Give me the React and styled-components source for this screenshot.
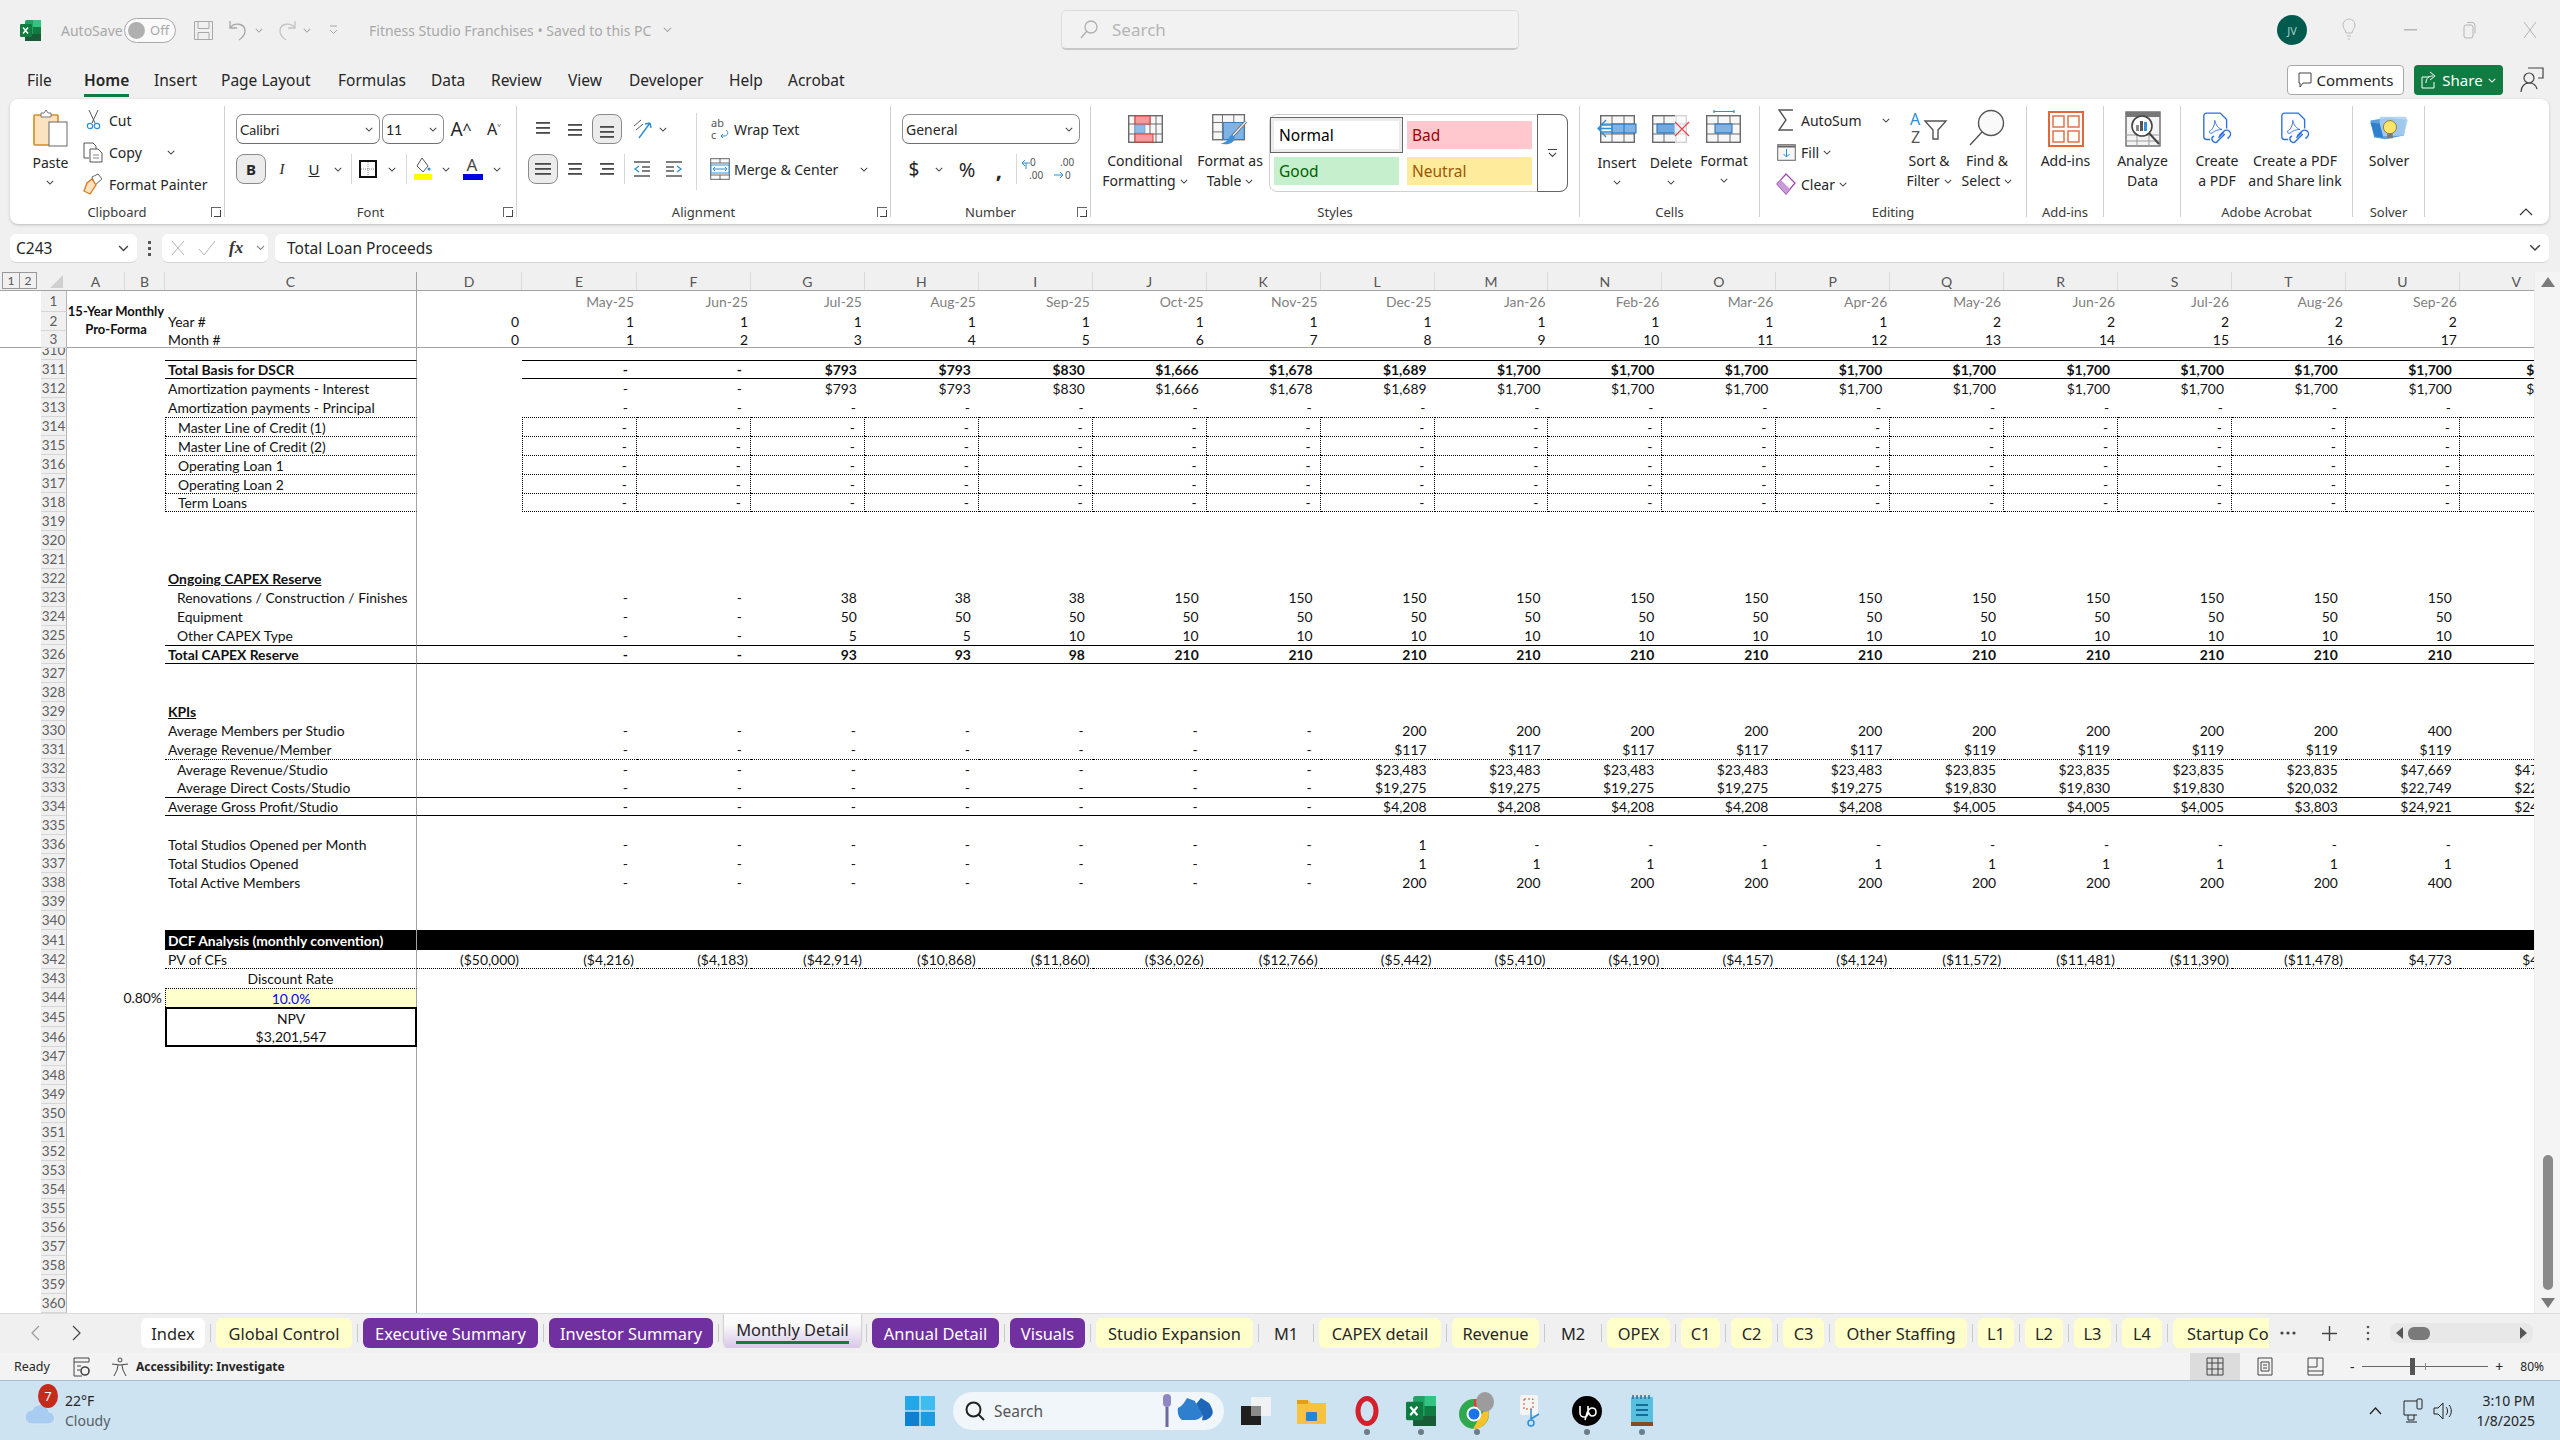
import React from "react";
import styled, { createGlobalStyle, css } from "styled-components";

const UI = `"Noto Sans", "Open Sans", sans-serif`;
const CELL = `Lato, "Liberation Sans", sans-serif`;

const GlobalStyle = createGlobalStyle`
  html, body { margin: 0; padding: 0; background: #f0f0f0; }
  * { box-sizing: border-box; }
  svg { display: block; flex: none; overflow: visible; }
`;

const Page = styled.div`
  width: 2560px;
  height: 1440px;
  display: flex;
  flex-direction: column;
  background: #f0f0f0;
  overflow: hidden;
  font-family: ${UI};
  color: #262626;
`;

/* ---------- little shared drawings ---------- */
const Chev = ({ s = 9, c = "#444" }) => (
  <svg width={s} height={s * 0.6} viewBox="0 0 10 6">
    <path d="M1 1l4 4 4-4" fill="none" stroke={c} strokeWidth="1.3" />
  </svg>
);

const TableGrid = ({ cols = [0, 12, 24, 35], rows = [0, 9, 19, 28], c = "#6a6a6a" }) => (
  <g fill="none" stroke={c} strokeWidth="1.4">
    <rect x="0.7" y="0.7" width="33.6" height="26.6" fill="#f7f7f7" />
    {cols.slice(1, -1).map((x) => <path key={x} d={`M${x} 0v28`} strokeWidth="1" />)}
    {rows.slice(1, -1).map((y) => <path key={y} d={`M0 ${y}h35`} strokeWidth="1" />)}
  </g>
);

const IconCond = () => (
  <svg width="35" height="28" viewBox="0 0 35 28">
    <TableGrid cols={[0, 7, 22, 28, 35]} />
    <rect x="7" y="1" width="15" height="8" fill="#f79aa0" stroke="#d83b3b" />
    <rect x="7" y="10" width="10" height="8" fill="#8dbce8" stroke="#5a9bd8" strokeWidth=".6" />
    <rect x="7" y="19" width="18" height="8" fill="#f79aa0" stroke="#d83b3b" />
  </svg>
);
const IconFormatTable = () => (
  <svg width="36" height="33" viewBox="0 0 38 35">
    <TableGrid cols={[0, 11, 23, 35]} />
    <rect x="12" y="9" width="22" height="18" fill="#7fb3e6" stroke="#2f7fc8" />
    <path d="M36 8L22 23" stroke="#666" strokeWidth="3.2" fill="none" />
    <path d="M36 8L22 23" stroke="#f3f3f3" strokeWidth="1.4" fill="none" />
    <path d="M21 22c-3 1-3 5-5 6-2 2-5 3-7 3 4 2 13 2 15-5 0-2-1-3-3-4z" fill="#3d90d6" />
  </svg>
);
const IconInsert = () => (
  <svg width="40" height="28" viewBox="0 0 40 28">
    <g transform="translate(3 0)"><TableGrid /></g>
    <rect x="15" y="9" width="24" height="9" fill="#7fb3e6" stroke="#1f6fb8" />
    <path d="M27 9v9" stroke="#1f6fb8" />
    <path d="M9 5L1 13.5 9 22M1 13.5h14M5 10h10M5 17h10" fill="none" stroke="#2b8fd8" strokeWidth="1.3" />
  </svg>
);
const IconDelete = () => (
  <svg width="38" height="28" viewBox="0 0 38 28">
    <TableGrid />
    <rect x="5" y="9" width="18" height="9" fill="#6fa9e0" stroke="#1f6fb8" />
    <path d="M22 8l6 5.5-6 5.5z" fill="#9cc6ec" />
    <rect x="23" y="0" width="15" height="28" fill="#fff" opacity=".7" />
    <path d="M23 7l14 14M37 7L23 21" stroke="#e8454a" strokeWidth="1.3" />
  </svg>
);
const IconFormatCell = () => (
  <svg width="36" height="33" viewBox="0 0 36 33">
    <path d="M8 1.5h20M8 0v3M28 0v3" stroke="#2b8fd8" strokeWidth="1.2" fill="none" />
    <g transform="translate(0 5)">
      <TableGrid />
      <rect x="9" y="9" width="17" height="9" fill="#7fb3e6" stroke="#1f6fb8" />
    </g>
  </svg>
);
const IconSort = () => (
  <svg width="38" height="36" viewBox="0 0 38 36">
    <text x="0" y="14" fontFamily="Noto Sans" fontSize="16" fill="#2b8fd8">A</text>
    <text x="1" y="32" fontFamily="Noto Sans" fontSize="16" fill="#555">Z</text>
    <path d="M15 10h21l-8 9v9h-5v-9z" fill="none" stroke="#555" strokeWidth="1.4" />
  </svg>
);
const IconFind = () => (
  <svg width="38" height="38" viewBox="0 0 38 38">
    <circle cx="23" cy="14" r="12.5" fill="#fafafa" stroke="#555" strokeWidth="1.4" />
    <path d="M14 23L2 36" stroke="#555" strokeWidth="1.4" />
  </svg>
);
const IconAddins = () => (
  <svg width="36" height="36" viewBox="0 0 36 36">
    <rect x="1" y="1" width="34" height="34" fill="none" stroke="#e2683c" strokeWidth="2" />
    <rect x="5" y="5" width="11" height="11" fill="none" stroke="#e2683c" strokeWidth="1.4" />
    <rect x="20" y="5" width="11" height="11" fill="none" stroke="#e2683c" strokeWidth="1.4" />
    <rect x="5" y="20" width="11" height="11" fill="none" stroke="#e2683c" strokeWidth="1.4" />
    <rect x="20" y="20" width="11" height="11" fill="none" stroke="#e2683c" strokeWidth="1.4" />
  </svg>
);
const IconAnalyze = () => (
  <svg width="36" height="36" viewBox="0 0 36 36">
    <rect x="1" y="1" width="34" height="34" fill="#f4f4f4" stroke="#6a6a6a" strokeWidth="1.4" />
    <rect x="1" y="1" width="34" height="5" fill="#777" />
    <path d="M1 24h34M1 30h34M12 24v11M24 24v11" stroke="#9a9a9a" />
    <circle cx="17" cy="15" r="10" fill="#fff" stroke="#444" strokeWidth="1.6" />
    <rect x="11" y="14" width="3" height="6" fill="#8a8a8a" />
    <rect x="15" y="10" width="3" height="10" fill="#555" />
    <rect x="19" y="11" width="3" height="9" fill="#3d90d6" />
    <path d="M24 22l10 11" stroke="#444" strokeWidth="2" />
  </svg>
);
const IconPdf = () => (
  <svg width="31" height="35" viewBox="0 0 34 38">
    <path d="M9 30H5a3 3 0 0 1-3-3V4a3 3 0 0 1 3-3h15l7 7v10" fill="none" stroke="#2f6fe0" strokeWidth="1.5" />
    <path d="M8 21c3-1 6-6 6-12 1 5 4 9 8 10-4 0-8 1-11 4-2 1-3-1-3-2z" fill="none" stroke="#2f6fe0" strokeWidth="1" />
    <path d="M19 26l5-5a4 4 0 0 1 6 6l-2 2M25 24l-6 6-3 3a4 4 0 0 1-5-5l2-2M18 28l6-6" fill="none" stroke="#2f6fe0" strokeWidth="1.6" />
  </svg>
);
const IconSolver = () => (
  <svg width="38" height="28" viewBox="0 0 40 30">
    <path d="M0 6l18-3 20 2-2 17-20 4-12-2z" fill="#5c9fdc" />
    <path d="M10 2h28l2 4-4 16-26 1z" fill="#a9cff0" opacity=".85" />
    <path d="M0 8l10 1 4 15-9-1z" fill="#2f80cc" />
    <circle cx="21" cy="13" r="7" fill="#ffe66b" stroke="#8a7a2a" />
    <path d="M18 20h6v5h-6z" fill="#7a7a7a" />
  </svg>
);
const IconPaste = () => (
  <svg width="36" height="38" viewBox="0 0 36 38">
    <rect x="1" y="6" width="24" height="30" rx="1" fill="#fbe3c0" stroke="#d98a20" strokeWidth="1.6" />
    <path d="M8 8V4h3l2-3 2 3h3v4z" fill="#fff" stroke="#777" />
    <rect x="16" y="13" width="18" height="24" fill="#fff" stroke="#666" />
  </svg>
);
const IconCut = () => (
  <svg width="15" height="20" viewBox="0 0 15 20">
    <path d="M3 0l6 13M12 0L6 13" stroke="#555" fill="none" />
    <circle cx="4" cy="16" r="2.7" fill="none" stroke="#2b8fd8" strokeWidth="1.2" />
    <circle cx="11" cy="16" r="2.7" fill="none" stroke="#2b8fd8" strokeWidth="1.2" />
  </svg>
);
const IconCopy = () => (
  <svg width="20" height="21" viewBox="0 0 20 21">
    <path d="M1 1h9l3 3v3M1 1v15h5" fill="none" stroke="#555" />
    <path d="M7 7h8l4 4v9H7z" fill="#fff" stroke="#555" />
    <path d="M10 13h6M10 16h6" stroke="#888" />
  </svg>
);
const IconPainter = () => (
  <svg width="20" height="22" viewBox="0 0 20 22">
    <path d="M9 4l6-3 4 5-7 6z" fill="#fff" stroke="#666" />
    <path d="M9 6l4 6-6 9-6-3 3-8z" fill="#fbe3c0" stroke="#e0761c" strokeWidth="1.3" />
  </svg>
);
const IconAlign = ({ lines, c = "#4a4a4a" }) => (
  <svg width="20" height="20" viewBox="0 0 20 20">
    {lines.map(([x, y, w]) => <rect key={y} x={x} y={y} width={w} height="1.8" fill={c} />)}
  </svg>
);
const IconOrient = () => (
  <svg width="22" height="22" viewBox="0 0 22 22">
    <path d="M3 8l7-6M5 12l7-6" stroke="#555" fill="none" />
    <path d="M8 20L19 5M19 5l-5 1M19 5l1 5" stroke="#2b8fd8" strokeWidth="1.4" fill="none" />
  </svg>
);
const IconWrap = () => (
  <svg width="20" height="24" viewBox="0 0 20 24">
    <text x="1" y="10" fontFamily="Noto Sans" fontSize="11" fill="#555">ab</text>
    <text x="1" y="22" fontFamily="Noto Sans" fontSize="11" fill="#555">c</text>
    <path d="M16 13c3 2 2 6-2 6h-3m2-2l-2 2 2 2" fill="none" stroke="#2b8fd8" />
  </svg>
);
const IconMerge = () => (
  <svg width="20" height="22" viewBox="0 0 20 22">
    <rect x=".7" y=".7" width="18.6" height="20.6" fill="#fff" stroke="#666" />
    <path d="M10 0v5M10 17v5M0 5h20M0 17h20" stroke="#666" />
    <rect x="1" y="7" width="18" height="8" fill="#fff" stroke="#2b8fd8" />
    <path d="M3 11h14M5 9l-2 2 2 2M15 9l2 2-2 2" fill="none" stroke="#2b8fd8" />
  </svg>
);
const IconIndent = ({ flip }) => (
  <svg width="20" height="20" viewBox="0 0 20 20">
    <g transform={flip ? "translate(20 0) scale(-1 1)" : undefined}>
      <path d="M2 3h16M10 8h8M10 12h8M2 17h16" stroke="#555" strokeWidth="1.4" />
      <path d="M7 7l-4 3 4 3" fill="none" stroke="#2b8fd8" strokeWidth="1.3" />
    </g>
  </svg>
);
const IconBorders = () => (
  <svg width="18" height="18" viewBox="0 0 18 18">
    <rect x="1" y="1" width="16" height="16" fill="#fff" stroke="#111" strokeWidth="2" />
    <path d="M9 2v14M2 9h14" stroke="#888" strokeDasharray="1 1" />
  </svg>
);
const IconFill = () => (
  <svg width="18" height="26" viewBox="0 0 18 26">
    <path d="M8 2l6 8-5 6-6-6z" fill="#fff" stroke="#555" />
    <circle cx="15" cy="13" r="1.5" fill="#2b8fd8" />
    <rect x="0" y="18" width="18" height="6" fill="#ffff00" />
  </svg>
);
const IconDecimal = ({ more }) => (
  <svg width="26" height="26" viewBox="0 0 26 26">
    <text x={more ? 8 : 9} y="10" fontFamily="Noto Sans" fontSize="10" fill="#555">{more ? ".00" : "0"}</text>
    <text x={more ? 13 : 8} y="23" fontFamily="Noto Sans" fontSize="10" fill="#555">{more ? "0" : ".00"}</text>
    <path d={more ? "M2 19h9m-3-3l3 3-3 3" : "M9 7H1m3-3L1 7l3 3"} fill="none" stroke="#2b8fd8" />
    <path d={more ? "" : "M5 7v6"} stroke="#2b8fd8" />
  </svg>
);
const IconSigma = () => (
  <svg width="18" height="22" viewBox="0 0 18 22">
    <path d="M16 1H2l7 10-7 10h14" fill="none" stroke="#555" strokeWidth="1.4" />
  </svg>
);
const IconFillDown = () => (
  <svg width="19" height="17" viewBox="0 0 19 17">
    <rect x=".7" y=".7" width="17.6" height="15.6" fill="#f6f6f6" stroke="#666" />
    <path d="M1 2.5h17" stroke="#666" strokeWidth="2" />
    <path d="M9.5 5v8M6.5 10l3 3 3-3" fill="none" stroke="#2b8fd8" />
  </svg>
);
const IconClear = () => (
  <svg width="20" height="22" viewBox="0 0 20 22">
    <path d="M10 1l9 9-9 11L1 11z" fill="#fff" stroke="#a349b5" strokeWidth="1.3" />
    <path d="M5 7l9 9-4 5-9-10z" fill="#c89ad6" />
  </svg>
);

const Launcher = styled.span`
  position: absolute;
  right: 3px;
  bottom: 0;
  width: 10px;
  height: 10px;
  border-left: 1px solid #666;
  border-top: 1px solid #666;
  &::after {
    content: "";
    position: absolute;
    right: 0;
    bottom: 0;
    width: 6px;
    height: 6px;
    border-right: 1px solid #444;
    border-bottom: 1px solid #444;
  }
`;

/* ---------- title bar ---------- */
const TitleBar = styled.div`
  height: 60px;
  flex: none;
  display: flex;
  align-items: center;
  color: #a8a8a8;
  font-size: 14px;
`;
const TitleSlot = styled.div`
  flex: none;
  margin-left: ${(p) => p.$ml || 0}px;
  width: ${(p) => p.$w}px;
  display: flex;
  align-items: center;
  justify-content: ${(p) => (p.$left ? "flex-start" : "center")};
  white-space: nowrap;
`;
const Toggle = styled.div`
  width: 52px;
  height: 25px;
  border: 1px solid #a8a8a8;
  border-radius: 13px;
  background: #fafafa;
  display: flex;
  align-items: center;
  padding-left: 3px;
  gap: 5px;
  font-size: 13px;
  &::before {
    content: "";
    width: 17px;
    height: 17px;
    border-radius: 50%;
    background: #b0b0b0;
  }
`;
const SearchBox = styled.div`
  margin-left: 390px;
  width: 458px;
  height: 40px;
  flex: none;
  display: flex;
  align-items: center;
  gap: 14px;
  padding-left: 18px;
  font-size: 17px;
  color: #b5b5b5;
  background: #f2f2f2;
  border: 1px solid #dcdcdc;
  border-bottom: 2px solid #c8c8c8;
  border-radius: 5px;
`;
const Avatar = styled.div`
  margin-left: 758px;
  width: 30px;
  height: 30px;
  flex: none;
  border-radius: 50%;
  background: #005a4e;
  color: #a7cfc6;
  font-size: 11px;
  display: flex;
  align-items: center;
  justify-content: center;
`;

/* ---------- menu row ---------- */
const MenuBar = styled.div`
  height: 39px;
  flex: none;
  display: flex;
  padding: 5px 0 0 27px;
`;
const MenuItem = styled.div`
  width: ${(p) => p.$w}px;
  flex: none;
  font-size: 15.5px;
`;
const MenuLabel = styled.span`
  display: inline-block;
  height: 32px;
  line-height: 31px;
  font-weight: ${(p) => (p.$active ? 600 : 400)};
  border-bottom: 3px solid ${(p) => (p.$active ? "#107c41" : "transparent")};
`;
const CommentsBtn = styled.div`
  margin-left: auto;
  width: 117px;
  height: 30px;
  flex: none;
  display: flex;
  align-items: center;
  justify-content: center;
  gap: 5px;
  background: #fff;
  border: 1px solid #a8a8a8;
  border-radius: 4px;
  font-size: 15px;
`;
const ShareBtn = styled.div`
  margin-left: 10px;
  width: 89px;
  height: 30px;
  flex: none;
  display: flex;
  align-items: center;
  justify-content: center;
  gap: 5px;
  background: #107c41;
  color: #fff;
  border-radius: 4px;
  font-size: 15px;
`;
const CoauthorSlot = styled.div`
  width: 57px;
  height: 30px;
  flex: none;
  display: flex;
  align-items: center;
  justify-content: center;
`;

/* ---------- ribbon ---------- */
const Ribbon = styled.div`
  position: relative;
  flex: none;
  margin: 0 11px 0 10px;
  height: 125px;
  padding: 7px 0;
  display: flex;
  background: #fff;
  border-radius: 8px;
  box-shadow: 0 1px 3px rgba(0, 0, 0, 0.22);
`;
const Group = styled.div`
  position: relative;
  flex: none;
  width: ${(p) => p.$w}px;
  display: flex;
  flex-direction: column;
  border-right: 1px solid #d2d2d2;
`;
const GroupBody = styled.div`
  height: 98px;
  flex: none;
  display: flex;
`;
const GroupLabel = styled.div`
  height: 16px;
  line-height: 16px;
  text-align: center;
  font-size: 13px;
  color: #3a3a3a;
`;
const LargeBtn = styled.div`
  flex: none;
  width: ${(p) => p.$w || 76}px;
  padding-top: 4px;
  display: flex;
  flex-direction: column;
  align-items: center;
  font-size: 14px;
  white-space: nowrap;
`;
const LargeIcon = styled.div`
  height: 37px;
  display: flex;
  align-items: ${(p) => p.$align || "flex-end"};
  justify-content: center;
`;
const LargeLabel = styled.div`
  margin-top: ${(p) => (p.$low ? 6 : 4)}px;
  line-height: 20px;
  text-align: center;
  display: flex;
  flex-direction: column;
  align-items: center;
`;
const LabelLine = styled.span`
  display: flex;
  align-items: center;
  gap: 4px;
  height: 20px;
`;
const ChevLine = styled.span`
  height: 18px;
  display: flex;
  align-items: center;
`;
const SmallStack = styled.div`
  flex: none;
  width: ${(p) => (p.$w ? `${p.$w}px` : "auto")};
  display: flex;
  flex-direction: column;
  gap: 4px;
  margin-left: ${(p) => p.$ml || 0}px;
`;
const SmallRow = styled.div`
  height: 28px;
  display: flex;
  align-items: center;
  font-size: 14px;
  white-space: nowrap;
`;
const ToolStack = styled.div`
  flex: none;
  padding: 8px 0 0 ${(p) => p.$pl ?? 11}px;
  display: flex;
  flex-direction: column;
  gap: 10px;
`;
const ToolRow = styled.div`
  height: 30px;
  display: flex;
  align-items: center;
  font-size: 14px;
  white-space: nowrap;
`;
const Tool = styled.div`
  flex: none;
  width: ${(p) => p.$w}px;
  height: 30px;
  margin-left: ${(p) => p.$ml || 0}px;
  display: flex;
  align-items: center;
  justify-content: center;
  font-size: ${(p) => p.$fs || 14}px;
  font-family: ${(p) => p.$font || "inherit"};
  font-weight: ${(p) => p.$fw || 400};
  font-style: ${(p) => p.$it ? "italic" : "normal"};
  text-decoration: ${(p) => p.$ul ? "underline" : "none"};
  ${(p) => p.$on && css`
    background: #ececec;
    border: 1px solid #8a8a8a;
    border-radius: 8px;
  `}
`;
const ToolText = styled.span`
  flex: none;
  width: ${(p) => (p.$w ? `${p.$w}px` : "auto")};
  margin-left: ${(p) => p.$ml || 0}px;
  font-size: 14px;
`;
const ToolSep = styled.div`
  flex: none;
  width: 1px;
  height: 30px;
  margin: 0 ${(p) => p.$mr || 4}px 0 ${(p) => p.$ml || 4}px;
  background: #d8d8d8;
`;
const Combo = styled.div`
  flex: none;
  width: ${(p) => p.$w}px;
  height: 30px;
  margin-left: ${(p) => p.$ml || 0}px;
  padding: 0 6px 0 3px;
  display: flex;
  align-items: center;
  justify-content: space-between;
  font-size: 14px;
  border: 1px solid #8f8f8f;
  border-bottom-color: #6f6f6f;
  border-radius: 7px;
  font-family: ${(p) => p.$font || "inherit"};
`;
const VLine = styled.div`
  flex: none;
  width: 1px;
  height: 77px;
  margin: 7px 0 0 ${(p) => p.$ml}px;
  background: #d8d8d8;
`;
const Gallery = styled.div`
  flex: none;
  margin: 8px 0 0 8px;
  width: 299px;
  height: 78px;
  display: flex;
  border: 1px solid #cfcfcf;
  border-radius: 8px;
`;
const StyleGrid = styled.div`
  flex: none;
  width: 267px;
  padding: 6px 4px;
  display: grid;
  grid-template-columns: 125px 125px;
  grid-auto-rows: 28px;
  column-gap: 8px;
  row-gap: 8px;
`;
const StyleCell = styled.div`
  display: flex;
  align-items: center;
  padding-left: 5px;
  font-size: 15.5px;
  color: ${(p) => p.$c};
  background: ${(p) => p.$bg};
  ${(p) => p.$sel && css`box-shadow: 0 0 0 3px #ececec, 0 0 0 4px #666;`}
`;
const GalleryScroll = styled.div`
  flex: 1;
  margin: -1px -1px -1px 0;
  display: flex;
  flex-direction: column;
  align-items: center;
  justify-content: center;
  gap: 2px;
  border: 1px solid #666;
  border-radius: 0 8px 8px 0;
`;
const GalleryDash = styled.span`
  width: 9px;
  height: 1px;
  background: #444;
`;
const CollapseBtn = styled.div`
  position: absolute;
  right: 16px;
  bottom: 8px;
`;

/* ---------- formula bar ---------- */
const FormulaRow = styled.div`
  flex: none;
  height: 29px;
  margin-top: 10px;
  padding: 0 11px 0 10px;
  display: flex;
  align-items: stretch;
`;
const NameBox = styled.div`
  flex: none;
  width: 127px;
  display: flex;
  align-items: center;
  justify-content: space-between;
  padding: 0 8px 0 6px;
  background: #fff;
  border-radius: 6px;
  border-bottom: 1px solid #d4d4d4;
  font-size: 15.5px;
`;
const DotsSlot = styled.div`
  flex: none;
  width: 25px;
  display: flex;
  flex-direction: column;
  align-items: center;
  justify-content: center;
  gap: 3px;
`;
const Dot = styled.span`
  width: 3px;
  height: 3px;
  background: #555;
`;
const FxBox = styled.div`
  flex: none;
  width: 106px;
  display: flex;
  align-items: center;
  gap: 13px;
  padding-left: 9px;
  background: #fff;
  border-radius: 6px;
  border-bottom: 1px solid #d4d4d4;
`;
const FxText = styled.span`
  font-family: "Liberation Serif", serif;
  font-style: italic;
  font-weight: 700;
  font-size: 17px;
  color: #333;
`;
const FormulaInput = styled.div`
  flex: 1;
  margin-left: 7px;
  padding: 0 8px 0 12px;
  display: flex;
  align-items: center;
  justify-content: space-between;
  background: #fff;
  border-radius: 6px;
  border-bottom: 1px solid #d4d4d4;
  font-size: 15.5px;
`;

/* ---------- sheet ---------- */
const COLS = css`
  grid-template-columns: 41px 26px 58px 40px 252px 105px 115px 114px repeat(16, 113.93px);
`;
const SOLID = "1px solid #000";
const DOT = "1px dotted #000";
const THICK = "2px solid #000";
const FREEZE = "1px solid #a3a3a3";

const SheetArea = styled.div`
  flex: none;
  height: 1041px;
  margin-top: 9px;
  display: flex;
  background: #fff;
`;
const GridArea = styled.div`
  flex: none;
  width: 2534px;
  overflow: hidden;
  display: flex;
  flex-direction: column;
  font-family: ${CELL};
  font-size: 13.9px;
  color: #111;
`;
const ColHeader = styled.div`
  flex: none;
  height: 19px;
  width: max-content;
  display: grid;
  ${COLS}
  background: #f0f0f0;
  border-bottom: 1px solid #a3a3a3;
`;
const OutlineBtns = styled.div`
  display: flex;
  padding-left: 2px;
  font-size: 12px;
  color: #555;
`;
const OutlineBtn = styled.span`
  width: 18px;
  height: 17px;
  display: flex;
  align-items: center;
  justify-content: center;
  border: 1px solid #999;
  margin-left: ${(p) => (p.$second ? -1 : 0)}px;
`;
const Corner = styled.div`
  display: flex;
  align-items: flex-end;
  justify-content: flex-end;
  padding: 0 4px 2px 0;
`;
const ColLabel = styled.div`
  display: flex;
  align-items: center;
  justify-content: center;
  color: #555;
  font-size: 14px;
  border-right: ${(p) => p.$freeze ? FREEZE : "1px solid #dadada"};
`;
const Frozen = styled.div`
  flex: none;
  height: 57px;
  width: max-content;
  display: grid;
  ${COLS}
  grid-template-rows: 21px 19px 17px;
  border-bottom: 1px solid #a3a3a3;
`;
const FrozenTitle = styled.div`
  grid-column: 3 / 5;
  grid-row: 1 / 4;
  display: flex;
  flex-direction: column;
  align-items: center;
  justify-content: center;
  font-weight: 700;
  line-height: 18px;
  font-size: 13px;
  white-space: nowrap;
`;
const RowHead = styled.div`
  background: #f0f0f0;
  color: #5e5e5e;
  font-size: 13.5px;
  display: flex;
  align-items: center;
  justify-content: center;
  border-right: 1px solid #b5b5b5;
  border-bottom: 1px solid #d6d6d6;
`;
const Body = styled.div`
  flex: 1;
  overflow: hidden;
`;
const Row = styled.div`
  width: max-content;
  height: ${(p) => p.$h || 19}px;
  margin-top: ${(p) => p.$mt || 0}px;
  display: grid;
  ${COLS}
`;
const Cell = styled.div`
  display: flex;
  align-items: center;
  white-space: nowrap;
  min-width: 0;
  justify-content: ${(p) => ({ r: "flex-end", c: "center" }[p.$a] || "flex-start")};
  padding: 0 ${(p) => p.$pr ?? 0}px 0 ${(p) => p.$pl ?? 0}px;
  font-weight: ${(p) => (p.$bold ? 700 : 400)};
  color: ${(p) => p.$c || "inherit"};
  background: ${(p) => p.$bg || "transparent"};
  border-top: ${(p) => p.$t || "none"};
  border-bottom: ${(p) => p.$b || "none"};
  border-left: ${(p) => p.$l || "none"};
  border-right: ${(p) => p.$r || "none"};
`;
const Underlined = styled.span`
  text-decoration: underline;
`;
const LabelIndent = 12;

const VScroll = styled.div`
  flex: 1;
  display: flex;
  flex-direction: column;
  align-items: center;
  background: #f4f4f4;
  border-left: 1px solid #ececec;
`;
const ScrollArrow = styled.div`
  flex: none;
  height: 20px;
  display: flex;
  align-items: center;
`;
const ScrollThumb = styled.div`
  flex: none;
  margin-top: auto;
  margin-bottom: 3px;
  width: 10px;
  height: 135px;
  background: #8a8a8a;
  border-radius: 5px;
`;

/* ---------- sheet tabs ---------- */
const TabBar = styled.div`
  flex: none;
  height: 40px;
  padding-bottom: 5px;
  display: flex;
  align-items: flex-end;
  border-top: 1px solid #dcdcdc;
`;
const TabNav = styled.div`
  flex: none;
  width: 141px;
  height: 30px;
  padding-left: 31px;
  display: flex;
  align-items: center;
  gap: 32px;
`;
const TabStrip = styled.div`
  flex: none;
  width: 2128px;
  display: flex;
  align-items: flex-end;
  overflow: hidden;
`;
const tabKinds = {
  white: css`background: #fff; height: 30px; border-radius: 6px;`,
  yellow: css`background: #ffffcc; height: 30px; border-radius: 6px;`,
  purple: css`background: #7030a0; color: #fff; height: 30px; border-radius: 6px;`,
  plain: css`height: 30px;`,
  active: css`
    height: 34px;
    background: linear-gradient(#fdfcfe, #fafafa 30%, #d9c6e8);
    border-radius: 0 0 6px 6px;
    box-shadow: 0 0 2px rgba(0, 0, 0, 0.45);
    align-items: flex-end;
    padding-bottom: 4px;
  `,
};
const Tab = styled.div`
  flex: none;
  width: ${(p) => p.$w}px;
  display: flex;
  align-items: center;
  justify-content: ${(p) => (p.$clip ? "flex-start" : "center")};
  padding-left: ${(p) => (p.$clip ? 14 : 0)}px;
  font-size: 16.4px;
  white-space: nowrap;
  overflow: hidden;
  ${(p) => tabKinds[p.$kind]}
`;
const ActiveLabel = styled.span`
  line-height: 23px;
  border-bottom: 3px solid #107c41;
`;
const TabSep = styled.span`
  flex: none;
  width: 1px;
  height: 18px;
  margin: 0 5px 6px;
  background: #c9c9c9;
`;
const TabTool = styled.div`
  flex: none;
  width: 24px;
  height: 30px;
  margin-left: ${(p) => p.$ml}px;
  display: flex;
  align-items: center;
  justify-content: center;
  font-size: 20px;
  color: #444;
`;
const HScroll = styled.div`
  flex: none;
  margin: 0 0 5px 10px;
  width: 143px;
  height: 20px;
  padding: 0 6px;
  display: flex;
  align-items: center;
  background: #e8e8e8;
  border-radius: 8px;
`;
const HThumb = styled.span`
  width: 22px;
  height: 13px;
  margin-left: 5px;
  margin-right: auto;
  background: #7a7a7a;
  border-radius: 6px;
`;

/* ---------- status bar ---------- */
const StatusBar = styled.div`
  flex: none;
  height: 27px;
  display: flex;
  align-items: center;
  background: #f3f3f3;
  font-size: 12.5px;
  padding-left: 14px;
`;
const StatusBold = styled.span`
  margin-left: 4px;
  font-weight: 700;
  font-size: 12px;
`;
const ViewBtn = styled.div`
  flex: none;
  width: 50px;
  height: 27px;
  margin-left: ${(p) => (p.$first ? "auto" : 0)};
  display: flex;
  align-items: center;
  justify-content: center;
  background: ${(p) => (p.$on ? "#dcdcdc" : "transparent")};
`;
const ZoomSlider = styled.div`
  position: relative;
  flex: none;
  margin: 0 5px 0 4px;
  width: 126px;
  height: 1px;
  background: #666;
  &::before {
    content: "";
    position: absolute;
    left: 48px;
    top: -8px;
    width: 5px;
    height: 17px;
    background: #555;
  }
  &::after {
    content: "";
    position: absolute;
    left: 63px;
    top: -3px;
    width: 1px;
    height: 7px;
    background: #888;
  }
`;
const ZoomSign = styled.span`
  flex: none;
  width: 12px;
  margin-left: ${(p) => p.$ml || 0}px;
  text-align: center;
  font-size: 14px;
`;
const ZoomPct = styled.span`
  flex: none;
  margin: 0 16px 0 15px;
  font-size: 12px;
`;

/* ---------- taskbar ---------- */
const Taskbar = styled.div`
  flex: none;
  height: 60px;
  display: flex;
  align-items: center;
  background: #cee3f1;
  border-top: 1px solid #a9bccb;
  padding: 0 25px;
`;
const Weather = styled.div`
  position: relative;
  flex: none;
  width: 30px;
  height: 28px;
  margin-top: 8px;
`;
const WeatherBadge = styled.span`
  position: absolute;
  left: 13px;
  top: -17px;
  width: 20px;
  height: 24px;
  border-radius: 50%;
  background: #c42b1c;
  color: #fff;
  font-size: 13px;
  display: flex;
  align-items: center;
  justify-content: center;
`;
const TwoLines = styled.div`
  flex: none;
  width: ${(p) => p.$w}px;
  margin-left: ${(p) => p.$ml}px;
  display: flex;
  flex-direction: column;
  align-items: ${(p) => (p.$end ? "flex-end" : "flex-start")};
  font-size: 14px;
  line-height: 20px;
`;
const MutedLine = styled.span`
  color: #565f66;
`;
const TaskSearch = styled.div`
  flex: none;
  margin-left: 18px;
  width: 271px;
  height: 38px;
  padding: 0 10px 0 12px;
  display: flex;
  align-items: center;
  gap: 9px;
  background: #f1f6fa;
  border-radius: 19px;
  font-size: 15.5px;
  color: #555;
`;
const TaskSearchArt = styled.div`
  margin-left: auto;
  display: flex;
  align-items: center;
  gap: 4px;
`;
const AppIcon = styled.div`
  position: relative;
  flex: none;
  width: 30px;
  height: 30px;
  margin-left: ${(p) => p.$ml}px;
  display: flex;
  align-items: center;
  justify-content: center;
  ${(p) => p.$open && css`
    &::after {
      content: "";
      position: absolute;
      left: 12px;
      bottom: -9px;
      width: 6px;
      height: 6px;
      border-radius: 50%;
      background: #6e7c86;
    }
  `}
`;
const TrayIcon = styled.div`
  flex: none;
  margin-left: ${(p) => p.$ml};
  width: ${(p) => p.$w}px;
  display: flex;
  justify-content: center;
`;

/* ---------- data ---------- */
const Dash = (n) => Array(n).fill("-");
const many = (v, n) => Array(n).fill(v);
const COLUMN_LETTERS = "ABCDEFGHIJKLMNOPQRSTUV".split("");
const MONTHS = ["May-25", "Jun-25", "Jul-25", "Aug-25", "Sep-25", "Oct-25", "Nov-25", "Dec-25", "Jan-26", "Feb-26", "Mar-26", "Apr-26", "May-26", "Jun-26", "Jul-26", "Aug-26", "Sep-26", ""];
const YEARS = [...many("1", 12), ...many("2", 5), ""];
const MONTH_NO = [...Array.from({ length: 17 }, (_, i) => String(i + 1)), ""];
const BASIS = ["-", "-", "$793", "$793", "$830", "$1,666", "$1,678", "$1,689", ...many("$1,700", 10)];

const row = (n, extra = {}) => ({ n, ...extra });
const ROWS = [
  row(310, { mt: -7 }),
  row(311, { label: "Total Basis for DSCR", bold: true, vals: BASIS, t: SOLID, b: SOLID, skipD: true, showV: true, lastPad: 4 }),
  row(312, { label: "Amortization payments - Interest", vals: BASIS, showV: true, lastPad: 4 }),
  row(313, { label: "Amortization payments - Principal", vals: Dash(17) }),
  row(314, { label: "Master Line of Credit (1)", indent: true, vals: Dash(17), t: DOT, boxed: true, skipD: true }),
  row(315, { label: "Master Line of Credit (2)", indent: true, vals: Dash(17), t: DOT, boxed: true, skipD: true }),
  row(316, { label: "Operating Loan 1", indent: true, vals: Dash(17), t: DOT, boxed: true, skipD: true }),
  row(317, { label: "Operating Loan 2", indent: true, vals: Dash(17), t: DOT, boxed: true, skipD: true }),
  row(318, { label: "Term Loans", indent: true, vals: Dash(17), t: DOT, b: DOT, boxed: true, skipD: true }),
  row(319), row(320), row(321),
  row(322, { label: "Ongoing CAPEX Reserve", bold: true, under: true }),
  row(323, { label: "Renovations / Construction / Finishes", indent: true, vals: ["-", "-", "38", "38", "38", ...many("150", 12)] }),
  row(324, { label: "Equipment", indent: true, vals: ["-", "-", ...many("50", 15)] }),
  row(325, { label: "Other CAPEX Type", indent: true, vals: ["-", "-", "5", "5", ...many("10", 13)] }),
  row(326, { label: "Total CAPEX Reserve", bold: true, vals: ["-", "-", "93", "93", "98", ...many("210", 12)], t: SOLID, b: SOLID }),
  row(327), row(328),
  row(329, { label: "KPIs", bold: true, under: true }),
  row(330, { label: "Average Members per Studio", vals: [...Dash(7), ...many("200", 9), "400"] }),
  row(331, { label: "Average Revenue/Member", vals: [...Dash(7), ...many("$117", 5), ...many("$119", 5)] }),
  row(332, { label: "Average Revenue/Studio", indent: true, t: DOT, showV: true, vals: [...Dash(7), ...many("$23,483", 5), ...many("$23,835", 4), "$47,669", "$47,669"] }),
  row(333, { label: "Average Direct Costs/Studio", indent: true, showV: true, vals: [...Dash(7), ...many("$19,275", 5), "$19,830", "$19,830", "$19,830", "$20,032", "$22,749", "$22,749"] }),
  row(334, { label: "Average Gross Profit/Studio", t: SOLID, b: SOLID, showV: true, vals: [...Dash(7), ...many("$4,208", 5), "$4,005", "$4,005", "$4,005", "$3,803", "$24,921", "$24,921"] }),
  row(335),
  row(336, { label: "Total Studios Opened per Month", vals: [...Dash(7), "1", ...Dash(9)] }),
  row(337, { label: "Total Studios Opened", vals: [...Dash(7), ...many("1", 10)] }),
  row(338, { label: "Total Active Members", vals: [...Dash(7), ...many("200", 9), "400"] }),
  row(339), row(340),
  row(341, { h: 20, label: "DCF Analysis (monthly convention)", bold: true, black: true }),
  row(342, { label: "PV of CFs", b: DOT, d: "($50,000)", showV: true, vals: ["($4,216)", "($4,183)", "($42,914)", "($10,868)", "($11,860)", "($36,026)", "($12,766)", "($5,442)", "($5,410)", "($4,190)", "($4,157)", "($4,124)", "($11,572)", "($11,481)", "($11,390)", "($11,478)", "$4,773", "$4,773"] }),
  row(343, { label: "Discount Rate", center: true }),
  row(344, { b2: "0.80%", label: "10.0%", center: true, input: true }),
  row(345, { h: 20, label: "NPV", center: true, box: "top" }),
  row(346, { h: 20, label: "$3,201,547", center: true, box: "bottom" }),
  ...Array.from({ length: 14 }, (_, i) => row(347 + i)),
];

// accounting format leaves a gap on the right, negatives in brackets do not
const valuePad = (v) => (v.startsWith("(") ? 3 : v === "-" ? 9 : 8);

const SheetRow = ({ r }) => {
  const dataT = r.black ? "none" : r.t;
  const dataB = r.b;
  const vals = r.vals || [];
  let labelProps = { $pl: r.indent ? LabelIndent : 3 };
  if (r.center) labelProps = { $a: "c" };
  const cBorder = r.box
    ? { $l: THICK, $r: THICK, $t: r.box === "top" ? THICK : undefined, $b: r.box === "bottom" ? THICK : undefined }
    : { $t: r.t, $b: r.b, $l: r.boxed || r.input ? DOT : undefined, $r: FREEZE };
  if (r.input) cBorder.$t = DOT;
  return (
    <Row $h={r.h} $mt={r.mt}>
      <div />
      <RowHead>{r.n}</RowHead>
      <Cell />
      <Cell $a="r" $pr={3}>{r.b2}</Cell>
      <Cell
        {...labelProps}
        {...cBorder}
        $bold={r.bold}
        $bg={r.black ? "#000" : r.input ? "#ffffcc" : undefined}
        $c={r.black ? "#fff" : r.input ? "#0000ff" : undefined}
      >
        {r.under ? <Underlined>{r.label}</Underlined> : r.label}
      </Cell>
      <Cell
        $a="r"
        $pr={3}
        $t={r.skipD ? undefined : dataT}
        $b={r.skipD ? undefined : dataB}
        $bg={r.black ? "#000" : undefined}
      >
        {r.d}
      </Cell>
      {Array.from({ length: 18 }, (_, i) => {
        const last = i === 17;
        const v = last && !r.showV ? undefined : vals[i];
        return (
          <Cell
            key={i}
            $a="r"
            $pr={!v ? 0 : last ? r.lastPad || 8 : valuePad(v)}
            $bold={r.bold}
            $t={dataT}
            $b={dataB}
            $l={r.boxed && i === 0 ? DOT : undefined}
            $r={r.boxed ? DOT : undefined}
            $bg={r.black ? "#000" : undefined}
          >
            {v}
          </Cell>
        );
      })}
    </Row>
  );
};

const FrozenRow = ({ n, label, d, vals, color }) => (
  <>
    <div />
    <RowHead>{n}</RowHead>
    <Cell $pl={3} $r={FREEZE}>{label}</Cell>
    <Cell $a="r" $pr={3}>{d}</Cell>
    {vals.map((v, i) => (
      <Cell key={i} $a="r" $pr={3} $c={color}>{v}</Cell>
    ))}
  </>
);

const TABS = [
  ["Index", "white", 64], ["Global Control", "yellow", 136], ["Executive Summary", "purple", 175],
  ["Investor Summary", "purple", 164], ["Monthly Detail", "active", 137], ["Annual Detail", "purple", 127],
  ["Visuals", "purple", 75], ["Studio Expansion", "yellow", 157], ["M1", "plain", 44],
  ["CAPEX detail", "yellow", 122], ["Revenue", "yellow", 87], ["M2", "plain", 46], ["OPEX", "yellow", 63],
  ["C1", "yellow", 39], ["C2", "yellow", 41], ["C3", "yellow", 41], ["Other Staffing", "yellow", 132],
  ["L1", "yellow", 36], ["L2", "yellow", 38], ["L3", "yellow", 37], ["L4", "yellow", 40],
  ["Startup Costs", "yellow", 120],
];
const MENU = [["File", 57], ["Home", 70], ["Insert", 67], ["Page Layout", 117], ["Formulas", 93], ["Data", 60], ["Review", 77], ["View", 61], ["Developer", 100], ["Help", 59], ["Acrobat", 60]];

/* ---------- sections ---------- */
const XlLogo = ({ s = 21 }) => (
  <svg width={s} height={s} viewBox="0 0 21 21">
    <rect x="5" y="0" width="16" height="21" rx="1.5" fill="#21a366" />
    <rect x="13" y="0" width="8" height="7" fill="#33c481" />
    <rect x="5" y="14" width="16" height="7" fill="#185c37" />
    <rect x="13" y="7" width="8" height="7" fill="#107c41" />
    <rect x="0" y="4" width="12" height="13" rx="1" fill="#107c41" />
    <path d="M3 7.5l5 6M8 7.5l-5 6" stroke="#fff" strokeWidth="1.5" />
  </svg>
);

const Title = () => (
  <TitleBar>
    <TitleSlot $ml={20} $w={21}><XlLogo /></TitleSlot>
    <TitleSlot $ml={20} $w={63} $left>AutoSave</TitleSlot>
    <TitleSlot $w={52}><Toggle>Off</Toggle></TitleSlot>
    <TitleSlot $ml={17} $w={21}>
      <svg width="21" height="21" viewBox="0 0 21 21" fill="none" stroke="#a8a8a8"><path d="M1.5 1.5h18v18h-18zM5 1.5v7h11v-7M5 19.5v-7h11v7" /></svg>
    </TitleSlot>
    <TitleSlot $ml={15} $w={18}>
      <svg width="18" height="22" viewBox="0 0 18 22" fill="none" stroke="#a8a8a8" strokeWidth="1.3"><path d="M1 2v7h7M1 9c4-6 15-5 15 3 0 4-3 7-6 9" /></svg>
    </TitleSlot>
    <TitleSlot $ml={8} $w={8}><Chev s={8} c="#a8a8a8" /></TitleSlot>
    <TitleSlot $ml={15} $w={18}>
      <svg width="18" height="22" viewBox="0 0 18 22" fill="none" stroke="#c4c4c4" strokeWidth="1.3"><path d="M17 2v7h-7M17 9C13 3 2 4 2 12c0 4 3 7 6 9" /></svg>
    </TitleSlot>
    <TitleSlot $ml={7} $w={8}><Chev s={8} c="#a8a8a8" /></TitleSlot>
    <TitleSlot $ml={18} $w={8}>
      <svg width="9" height="10" viewBox="0 0 9 10" fill="none" stroke="#a8a8a8"><path d="M1 1h7M1 5l3.5 3.5L8 5" /></svg>
    </TitleSlot>
    <TitleSlot $ml={32} $w={294} $left>Fitness Studio Franchises • Saved to this PC</TitleSlot>
    <TitleSlot $w={8}><Chev s={9} c="#a8a8a8" /></TitleSlot>
    <SearchBox>
      <svg width="18" height="20" viewBox="0 0 18 20" fill="none" stroke="#b0b0b0" strokeWidth="1.3"><circle cx="11" cy="7" r="6" /><path d="M6.5 11.5L1 18" /></svg>
      Search
    </SearchBox>
    <Avatar>JV</Avatar>
    <TitleSlot $ml={32} $w={20}>
      <svg width="14" height="22" viewBox="0 0 14 22" fill="none" stroke="#bcbcbc"><path d="M4 14c0-3-3-4-3-8a6 6 0 0 1 12 0c0 4-3 5-3 8zM5 17h4M6 20h2" /></svg>
    </TitleSlot>
    <TitleSlot $ml={43} $w={16}><svg width="13" height="2"><rect width="13" height="1.5" fill="#b5b5b5" /></svg></TitleSlot>
    <TitleSlot $ml={44} $w={14}>
      <svg width="13" height="18" viewBox="0 0 13 18" fill="none" stroke="#b5b5b5"><rect x="1" y="4" width="9" height="13" rx="2" /><path d="M4 1.5h5a3 3 0 0 1 3 3v8" /></svg>
    </TitleSlot>
    <TitleSlot $ml={46} $w={16}>
      <svg width="14" height="20" viewBox="0 0 14 20" fill="none" stroke="#b5b5b5"><path d="M1 2l12 16M13 2L1 18" /></svg>
    </TitleSlot>
  </TitleBar>
);

const Menu = () => (
  <MenuBar>
    {MENU.map(([m, w]) => (
      <MenuItem key={m} $w={w}><MenuLabel $active={m === "Home"}>{m}</MenuLabel></MenuItem>
    ))}
    <CommentsBtn>
      <svg width="14" height="18" viewBox="0 0 14 18" fill="none" stroke="#444"><path d="M1 2h12v10H5l-3 4v-4H1z" /></svg>
      Comments
    </CommentsBtn>
    <ShareBtn>
      <svg width="16" height="18" viewBox="0 0 16 18" fill="none" stroke="#fff"><path d="M8 6H1v11h12v-6M5 12c0-5 3-7 7-7M9 1l5 4-5 4" /></svg>
      Share
      <Chev s={8} c="#fff" />
    </ShareBtn>
    <CoauthorSlot>
      <svg width="24" height="26" viewBox="0 0 24 26" fill="none" stroke="#444" strokeWidth="1.2"><circle cx="9" cy="11" r="5" /><path d="M1 25c0-6 4-9 8-9s7 2 8 6M8 1h15v10h-5" /></svg>
    </CoauthorSlot>
  </MenuBar>
);

const Large = ({ icon, lines, w, low, chevOnly, align }) => (
  <LargeBtn $w={w}>
    <LargeIcon $align={align}>{icon}</LargeIcon>
    <LargeLabel $low={low}>
      {lines.map(([t, c]) => (
        <LabelLine key={t}>{t}{c && <Chev s={8} />}</LabelLine>
      ))}
      {chevOnly && <ChevLine><Chev s={8} /></ChevLine>}
    </LargeLabel>
  </LargeBtn>
);

const L1 = [[2, 4, 16], [2, 9, 16], [2, 14, 16]];
const RibbonArea = () => (
  <Ribbon>
    <Group $w={215}>
      <GroupBody>
        <Large w={81} low chevOnly lines={[["Paste"]]} icon={<IconPaste />} />
        <SmallStack $ml={-9}>
          <SmallRow><Tool $w={22}><IconCut /></Tool><ToolText $ml={5}>Cut</ToolText></SmallRow>
          <SmallRow><Tool $w={22}><IconCopy /></Tool><ToolText $w={36} $ml={5}>Copy</ToolText><Tool $w={8} $ml={22}><Chev s={8} /></Tool></SmallRow>
          <SmallRow><Tool $w={22}><IconPainter /></Tool><ToolText $ml={5}>Format Painter</ToolText></SmallRow>
        </SmallStack>
      </GroupBody>
      <GroupLabel>Clipboard</GroupLabel>
      <Launcher />
    </Group>

    <Group $w={292}>
      <GroupBody>
        <ToolStack>
          <ToolRow>
            <Combo $w={144} $font={CELL}>Calibri<Chev s={8} /></Combo>
            <Combo $w={62} $ml={2} $font={CELL}>11<Chev s={8} /></Combo>
            <Tool $w={30} $ml={2} $fs={19}>A<sup>^</sup></Tool>
            <Tool $w={32} $ml={2} $fs={16}>A<sup>˅</sup></Tool>
          </ToolRow>
          <ToolRow>
            <Tool $w={30} $on $fw={700} $fs={15}>B</Tool>
            <Tool $w={32} $fs={15} $it $font={`"Liberation Serif", serif`}>I</Tool>
            <Tool $w={32} $fs={15} $ul>U</Tool>
            <Tool $w={16}><Chev s={8} /></Tool>
            <ToolSep $ml={5} $mr={4} />
            <Tool $w={24}><IconBorders /></Tool>
            <Tool $w={16} $ml={4}><Chev s={8} /></Tool>
            <ToolSep $ml={6} $mr={4} />
            <Tool $w={24}><IconFill /></Tool>
            <Tool $w={16} $ml={3}><Chev s={8} /></Tool>
            <Tool $w={24} $ml={7}>
              <svg width="20" height="26" viewBox="0 0 20 26">
                <text x="3.5" y="15" fontFamily="Noto Sans" fontSize="17" fill="#444">A</text>
                <rect x="0" y="18" width="20" height="6" fill="#0000e6" />
              </svg>
            </Tool>
            <Tool $w={16} $ml={4}><Chev s={8} /></Tool>
          </ToolRow>
        </ToolStack>
      </GroupBody>
      <GroupLabel>Font</GroupLabel>
      <Launcher />
    </Group>

    <Group $w={374}>
      <GroupBody>
        <ToolStack>
          <ToolRow>
            <Tool $w={30}><IconAlign lines={[[3, 3, 14], [3, 8, 14], [3, 13, 14]]} /></Tool>
            <Tool $w={30} $ml={2}><IconAlign lines={[[3, 5, 14], [3, 10, 14], [3, 15, 14]]} /></Tool>
            <Tool $w={30} $ml={2} $on><IconAlign lines={[[3, 7, 14], [3, 12, 14], [3, 17, 14]]} /></Tool>
            <Tool $w={24} $ml={8}><IconOrient /></Tool>
            <Tool $w={12} $ml={3}><Chev s={8} /></Tool>
          </ToolRow>
          <ToolRow>
            <Tool $w={30} $on><IconAlign lines={L1} /></Tool>
            <Tool $w={30} $ml={2}><IconAlign lines={[[3, 4, 14], [4, 9, 12], [3, 14, 14]]} /></Tool>
            <Tool $w={30} $ml={2}><IconAlign lines={[[3, 4, 14], [5, 9, 12], [3, 14, 14]]} /></Tool>
            <ToolSep $ml={2} $mr={2} />
            <Tool $w={30}><IconIndent /></Tool>
            <Tool $w={30} $ml={2}><IconIndent flip /></Tool>
          </ToolRow>
        </ToolStack>
        <VLine $ml={7} />
        <ToolStack $pl={12}>
          <ToolRow><Tool $w={22}><IconWrap /></Tool><ToolText $ml={3}>Wrap Text</ToolText></ToolRow>
          <ToolRow><Tool $w={22}><IconMerge /></Tool><ToolText $w={106} $ml={3}>Merge &amp; Center</ToolText><Tool $w={10} $ml={19}><Chev s={8} /></Tool></ToolRow>
        </ToolStack>
      </GroupBody>
      <GroupLabel>Alignment</GroupLabel>
      <Launcher />
    </Group>

    <Group $w={200}>
      <GroupBody>
        <ToolStack>
          <ToolRow><Combo $w={178}>General<Chev s={8} /></Combo></ToolRow>
          <ToolRow>
            <Tool $w={24} $fs={19}>$</Tool>
            <Tool $w={12} $ml={7}><Chev s={8} /></Tool>
            <Tool $w={30} $ml={7} $fs={20}>%</Tool>
            <Tool $w={24} $ml={5} $fs={22} $fw={700}>,</Tool>
            <ToolSep $ml={5} $mr={2} />
            <Tool $w={30}><IconDecimal /></Tool>
            <Tool $w={30} $ml={1}><IconDecimal more /></Tool>
          </ToolRow>
        </ToolStack>
      </GroupBody>
      <GroupLabel>Number</GroupLabel>
      <Launcher />
    </Group>

    <Group $w={489}>
      <GroupBody>
        <Large w={108} icon={<IconCond />} lines={[["Conditional"], ["Formatting", true]]} align="center" />
        <Large w={62} icon={<IconFormatTable />} lines={[["Format as"], ["Table", true]]} />
        <Gallery>
          <StyleGrid>
            <StyleCell $bg="#fff" $c="#000" $sel>Normal</StyleCell>
            <StyleCell $bg="#ffc7ce" $c="#9c0006">Bad</StyleCell>
            <StyleCell $bg="#c6efce" $c="#006100">Good</StyleCell>
            <StyleCell $bg="#ffeb9c" $c="#9c5700">Neutral</StyleCell>
          </StyleGrid>
          <GalleryScroll><GalleryDash /><Chev s={9} /></GalleryScroll>
        </Gallery>
      </GroupBody>
      <GroupLabel>Styles</GroupLabel>
    </Group>

    <Group $w={180}>
      <GroupBody>
        <Large w={74} low chevOnly align="center" icon={<IconInsert />} lines={[["Insert"]]} />
        <Large w={34} low chevOnly align="center" icon={<IconDelete />} lines={[["Delete"]]} />
        <Large w={72} chevOnly align="flex-start" icon={<IconFormatCell />} lines={[["Format"]]} />
      </GroupBody>
      <GroupLabel>Cells</GroupLabel>
    </Group>

    <Group $w={267}>
      <GroupBody>
        <SmallStack $ml={14} $w={126}>
          <SmallRow><Tool $w={24}><IconSigma /></Tool><ToolText $w={72} $ml={3}>AutoSum</ToolText><Tool $w={10} $ml={8}><Chev s={8} /></Tool></SmallRow>
          <SmallRow><Tool $w={24}><IconFillDown /></Tool><ToolText $ml={3}>Fill</ToolText><Tool $w={10} $ml={3}><Chev s={8} /></Tool></SmallRow>
          <SmallRow><Tool $w={24}><IconClear /></Tool><ToolText $ml={3}>Clear</ToolText><Tool $w={10} $ml={3}><Chev s={8} /></Tool></SmallRow>
        </SmallStack>
        <Large w={58} icon={<IconSort />} lines={[["Sort &"], ["Filter", true]]} />
        <Large w={58} icon={<IconFind />} lines={[["Find &"], ["Select", true]]} />
      </GroupBody>
      <GroupLabel>Editing</GroupLabel>
    </Group>

    <Group $w={77}>
      <GroupBody><Large w={77} icon={<IconAddins />} lines={[["Add-ins"]]} /></GroupBody>
      <GroupLabel>Add-ins</GroupLabel>
    </Group>
    <Group $w={77}>
      <GroupBody><Large w={77} icon={<IconAnalyze />} lines={[["Analyze"], ["Data"]]} /></GroupBody>
    </Group>
    <Group $w={172}>
      <GroupBody>
        <Large w={72} icon={<IconPdf />} lines={[["Create"], ["a PDF"]]} />
        <Large w={84} icon={<IconPdf />} lines={[["Create a PDF"], ["and Share link"]]} />
      </GroupBody>
      <GroupLabel>Adobe Acrobat</GroupLabel>
    </Group>
    <Group $w={72}>
      <GroupBody><Large w={72} align="center" icon={<IconSolver />} lines={[["Solver"]]} /></GroupBody>
      <GroupLabel>Solver</GroupLabel>
    </Group>
    <CollapseBtn>
      <svg width="14" height="9" viewBox="0 0 14 9" fill="none" stroke="#333" strokeWidth="1.2"><path d="M1 8l6-6 6 6" /></svg>
    </CollapseBtn>
  </Ribbon>
);

const Formula = () => (
  <FormulaRow>
    <NameBox>C243<Chev s={11} /></NameBox>
    <DotsSlot><Dot /><Dot /><Dot /></DotsSlot>
    <FxBox>
      <svg width="14" height="18" viewBox="0 0 14 18" fill="none" stroke="#b5b5b5"><path d="M1 2l12 14M13 2L1 16" /></svg>
      <svg width="18" height="18" viewBox="0 0 18 18" fill="none" stroke="#b5b5b5"><path d="M1 10l5 6L17 2" /></svg>
      <FxText>fx</FxText>
      <Chev s={9} c="#888" />
    </FxBox>
    <FormulaInput>
      Total Loan Proceeds
      <Chev s={12} />
    </FormulaInput>
  </FormulaRow>
);

const Sheet = () => (
  <SheetArea>
    <GridArea>
      <ColHeader>
        <OutlineBtns><OutlineBtn>1</OutlineBtn><OutlineBtn $second>2</OutlineBtn></OutlineBtns>
        <Corner><svg width="13" height="13"><path d="M13 0v13H0z" fill="#d0d0d0" /></svg></Corner>
        {COLUMN_LETTERS.map((l) => <ColLabel key={l} $freeze={l === "C"}>{l}</ColLabel>)}
      </ColHeader>
      <Frozen>
        <FrozenTitle><span>15-Year Monthly</span><span>Pro-Forma</span></FrozenTitle>
        <FrozenRow n={1} vals={MONTHS} color="#808080" />
        <FrozenRow n={2} label="Year #" d="0" vals={YEARS} />
        <FrozenRow n={3} label="Month #" d="0" vals={MONTH_NO} />
      </Frozen>
      <Body>
        {ROWS.map((r) => <SheetRow key={r.n} r={r} />)}
      </Body>
    </GridArea>
    <VScroll>
      <ScrollArrow><svg width="14" height="10"><path d="M7 0l7 10H0z" fill="#7a7a7a" /></svg></ScrollArrow>
      <ScrollThumb />
      <ScrollArrow><svg width="14" height="10"><path d="M7 10l7-10H0z" fill="#7a7a7a" /></svg></ScrollArrow>
    </VScroll>
  </SheetArea>
);

const SheetTabs = () => (
  <TabBar>
    <TabNav>
      <svg width="9" height="16" viewBox="0 0 9 16" fill="none" stroke="#9a9a9a" strokeWidth="1.2"><path d="M8 1L1 8l7 7" /></svg>
      <svg width="9" height="16" viewBox="0 0 9 16" fill="none" stroke="#444" strokeWidth="1.2"><path d="M1 1l7 7-7 7" /></svg>
    </TabNav>
    <TabStrip>
      {TABS.map(([name, kind, w], i) => (
        <React.Fragment key={name}>
          {i > 0 && <TabSep />}
          <Tab $kind={kind} $w={w} $clip={name === "Startup Costs"}>
            {kind === "active" ? <ActiveLabel>{name}</ActiveLabel> : name}
          </Tab>
        </React.Fragment>
      ))}
    </TabStrip>
    <TabTool $ml={7}>
      <svg width="16" height="4"><circle cx="2" cy="2" r="1.6" fill="#444" /><circle cx="8" cy="2" r="1.6" fill="#444" /><circle cx="14" cy="2" r="1.6" fill="#444" /></svg>
    </TabTool>
    <TabTool $ml={17}>
      <svg width="15" height="15"><path d="M7.5 0v15M0 7.5h15" stroke="#444" strokeWidth="1.4" /></svg>
    </TabTool>
    <TabTool $ml={15}>
      <svg width="4" height="16"><circle cx="2" cy="2" r="1.3" fill="#555" /><circle cx="2" cy="8" r="1.3" fill="#555" /><circle cx="2" cy="14" r="1.3" fill="#555" /></svg>
    </TabTool>
    <HScroll>
      <svg width="7" height="12"><path d="M7 0v12L0 6z" fill="#555" /></svg>
      <HThumb />
      <svg width="7" height="12"><path d="M0 0v12l7-6z" fill="#555" /></svg>
    </HScroll>
  </TabBar>
);

const Status = () => (
  <StatusBar>
    Ready
    <Tool $w={22} $ml={21}>
      <svg width="18" height="20" viewBox="0 0 18 20" fill="none" stroke="#444"><path d="M1 1h15v4H1zM1 5v14h8M4 9h4M4 13h3" /><circle cx="12" cy="14" r="4" strokeWidth="1.6" /></svg>
    </Tool>
    <Tool $w={24} $ml={15}>
      <svg width="20" height="20" viewBox="0 0 20 20" fill="none" stroke="#444"><circle cx="10" cy="3" r="2" /><path d="M2 7l8 1 8-1M8 8l-1 5-3 6M12 8l1 5 3 6" /></svg>
    </Tool>
    <StatusBold>Accessibility: Investigate</StatusBold>
    <ViewBtn $first $on>
      <svg width="18" height="19" viewBox="0 0 18 19" fill="none" stroke="#444"><path d="M1 1h16v17H1zM6 1v17M12 1v17M1 6h16M1 12h16" /></svg>
    </ViewBtn>
    <ViewBtn>
      <svg width="16" height="19" viewBox="0 0 16 19" fill="none" stroke="#444"><path d="M1 1h14v17H1zM4 5h8v9H4zM6 8h4M6 11h4" /></svg>
    </ViewBtn>
    <ViewBtn>
      <svg width="17" height="19" viewBox="0 0 17 19" fill="none" stroke="#444"><path d="M1 1h15v17H1zM10 1v9H1M1 14h15" /></svg>
    </ViewBtn>
    <ZoomSign $ml={6}>-</ZoomSign>
    <ZoomSlider />
    <ZoomSign>+</ZoomSign>
    <ZoomPct>80%</ZoomPct>
  </StatusBar>
);

const Tray = () => (
  <Taskbar>
    <Weather>
      <svg width="30" height="24" viewBox="0 0 30 24"><path d="M7 23a7 7 0 0 1 0-14 9 9 0 0 1 17 2 6 6 0 0 1-1 12z" fill="#a9cdf0" stroke="#d9e9f7" /></svg>
      <WeatherBadge>7</WeatherBadge>
    </Weather>
    <TwoLines $ml={10} $w={60}><span>22°F</span><MutedLine>Cloudy</MutedLine></TwoLines>
    <TitleSlot $ml={780} $w={30}>
      <svg width="30" height="30" viewBox="0 0 30 30">
        <rect x="0" y="0" width="14.3" height="14.3" fill="#22a7e8" /><rect x="15.7" y="0" width="14.3" height="14.3" fill="#3fbdf0" />
        <rect x="0" y="15.7" width="14.3" height="14.3" fill="#0f7fd0" /><rect x="15.7" y="15.7" width="14.3" height="14.3" fill="#1b9be0" />
      </svg>
    </TitleSlot>
    <TaskSearch>
      <svg width="20" height="20" viewBox="0 0 20 20" fill="none" stroke="#222" strokeWidth="2"><circle cx="8.5" cy="8.5" r="7" /><path d="M13.5 13.5L19 19" /></svg>
      Search
      <TaskSearchArt>
        <svg width="10" height="34" viewBox="0 0 10 34"><rect x="1" y="0" width="8" height="13" rx="4" fill="#8f86c4" /><path d="M5 13v20" stroke="#6f66a6" strokeWidth="3" /></svg>
        <svg width="38" height="30" viewBox="0 0 38 30"><path d="M2 12c4-2 7-6 9-10l8 3c2 7 6 7 8 10 1 4-2 8-8 9H6c-3-2-5-7-4-12z" fill="#2f7fcf" /><path d="M20 8l5-6 8 5c3 5 5 9 3 12-2 4-7 6-10 5 2-5-1-9-6-16z" fill="#1f66b8" /></svg>
      </TaskSearchArt>
    </TaskSearch>
    <AppIcon $ml={17}>
      <svg width="30" height="28" viewBox="0 0 30 28"><rect x="0" y="9" width="20" height="19" fill="#1f1f1f" /><rect x="10" y="0" width="20" height="19" fill="#f4f4f4" opacity=".9" /><rect x="10" y="9" width="10" height="10" fill="#8a8a8a" /></svg>
    </AppIcon>
    <AppIcon $ml={25}>
      <svg width="29" height="27" viewBox="0 0 29 27"><path d="M0 3h11l3 3h15v21H0z" fill="#f7c23e" /><rect x="0" y="3" width="11" height="4" fill="#e39f1a" /><rect x="9" y="15" width="11" height="9" rx="1" fill="#1e88d2" /></svg>
    </AppIcon>
    <AppIcon $ml={26} $open>
      <svg width="24" height="30" viewBox="0 0 24 30" fill="none"><ellipse cx="12" cy="15" rx="9" ry="12.5" stroke="#d3202c" strokeWidth="5" /></svg>
    </AppIcon>
    <AppIcon $ml={24} $open><XlLogo s={30} /></AppIcon>
    <AppIcon $ml={26} $open>
      <svg width="36" height="38" viewBox="0 0 36 38">
        <circle cx="15" cy="22" r="15" fill="#2fa84f" />
        <path d="M15 7a15 15 0 0 1 13 8H15z" fill="#e33b2e" />
        <path d="M28 15a15 15 0 0 1-14 22l6-11z" fill="#f8c22c" />
        <circle cx="15" cy="22" r="6.5" fill="#1a73e8" stroke="#fff" strokeWidth="2" />
        <ellipse cx="26" cy="10" rx="9" ry="10" fill="#9c9c9c" />
      </svg>
    </AppIcon>
    <AppIcon $ml={25}>
      <svg width="24" height="32" viewBox="0 0 24 32"><rect x="0" y="0" width="18" height="20" rx="2" fill="#f4f4f4" /><rect x="4" y="4" width="9" height="10" fill="none" stroke="#c8502a" strokeDasharray="2 2" /><path d="M11 14v10M11 24l8-5" stroke="#2b8fd8" strokeWidth="1.5" /><circle cx="11" cy="28" r="3" fill="none" stroke="#2b8fd8" strokeWidth="1.5" /></svg>
    </AppIcon>
    <AppIcon $ml={25} $open>
      <svg width="30" height="30" viewBox="0 0 30 30"><circle cx="15" cy="15" r="15" fill="#000" /><path d="M8 10v7a4 4 0 0 0 8 0v-7m0 5c1 3 2 5 4 5 3 0 4-2 4-4s-1-4-4-4-4 3-5 5l-2 7" fill="none" stroke="#fff" strokeWidth="1.6" /></svg>
    </AppIcon>
    <AppIcon $ml={25} $open>
      <svg width="22" height="31" viewBox="0 0 22 31"><rect x="0" y="2" width="22" height="27" rx="1" fill="#57c0e0" /><rect x="0" y="27" width="22" height="4" fill="#8a4a20" /><path d="M2 0v4M6 0v4M10 0v4M14 0v4M18 0v4" stroke="#1f6fa8" strokeWidth="1.5" /><path d="M5 10h12M5 15h12M5 20h12" stroke="#136d96" strokeWidth="2" /></svg>
    </AppIcon>
    <TrayIcon $ml="auto" $w={14}>
      <svg width="13" height="9" viewBox="0 0 13 9" fill="none" stroke="#222" strokeWidth="1.3"><path d="M1 8l5.5-6L12 8" /></svg>
    </TrayIcon>
    <TrayIcon $ml="21px" $w={20}>
      <svg width="20" height="26" viewBox="0 0 20 26" fill="none" stroke="#222"><path d="M14 17H1V3h13M5 17v5h6v-5M3 24h11" /><rect x="14" y="1" width="5" height="10" rx="1" /></svg>
    </TrayIcon>
    <TrayIcon $ml="10px" $w={20}>
      <svg width="20" height="20" viewBox="0 0 20 20" fill="none" stroke="#222"><path d="M1 7h4l5-5v16l-5-5H1zM13 6c2 2 2 6 0 8M16 4c3 3 3 9 0 12" /></svg>
    </TrayIcon>
    <TwoLines $ml={12} $w={70} $end><span>3:10 PM</span><span>1/8/2025</span></TwoLines>
  </Taskbar>
);

export default function App() {
  return (
    <Page>
      <GlobalStyle />
      <Title />
      <Menu />
      <RibbonArea />
      <Formula />
      <Sheet />
      <SheetTabs />
      <Status />
      <Tray />
    </Page>
  );
}
